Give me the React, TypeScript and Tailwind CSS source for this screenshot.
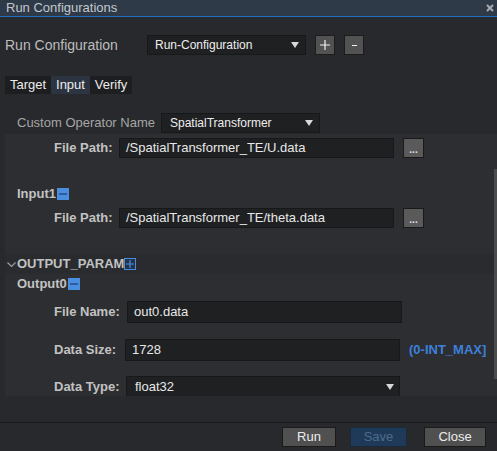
import React from "react";

const Tri = () => (
  <svg width="8" height="6" viewBox="0 0 8 6" className="shrink-0">
    <polygon points="0,0 8,0 4,6" fill="#d8d8d8" />
  </svg>
);

const MinusBox = () => (
  <span className="inline-flex w-[12px] h-[12px] bg-[#4a8ee0] items-center justify-center shrink-0">
    <span className="block w-[8px] h-[2px] bg-[#2b5d9e]" />
  </span>
);

const PlusBox = () => (
  <span className="inline-flex w-[12px] h-[12px] border border-[#4a8ee0] bg-[#25324a] items-center justify-center shrink-0">
    <svg width="8" height="8" viewBox="0 0 8 8">
      <path d="M4 0V8M0 4H8" stroke="#4a8ee0" strokeWidth="1.2" />
    </svg>
  </span>
);

const Field = ({ value, w = "w-[275px]", h = "h-[21px]" }: { value: string; w?: string; h?: string }) => (
  <div className={`${w} ${h} bg-[#1f2022] border border-[#17181a] flex items-center pl-[6px] text-[13px] text-[#e8e8e8] shrink-0`}>
    {value}
  </div>
);

const Dots = () => (
  <div className="w-[21px] h-[20px] bg-[#5a5a5b] border border-[#1a1a1a] flex items-end justify-center pb-[4px] shrink-0">
    <span className="text-[#e0e0e0] text-[10px] leading-[6px] font-bold tracking-[0px]">...</span>
  </div>
);

export default function App() {
  return (
    <div className="w-[497px] h-[451px] bg-[#27292c] flex flex-col overflow-hidden font-['Liberation_Sans',Arial,sans-serif] select-none">
      {/* title bar */}
      <div className="h-[16px] bg-[#2e3a48] flex items-center justify-between pl-[6px] pr-[3px] overflow-hidden shrink-0">
        <span className="text-[13px] leading-[13px] text-[#c4c8cc] -mt-[2px]">Run Configurations</span>
        <svg width="8" height="8" viewBox="0 0 8 8" className="-mt-[1px]">
          <path d="M1 1L7 7M7 1L1 7" stroke="#a8acb0" strokeWidth="2" />
        </svg>
      </div>
      <div className="h-[1px] bg-[#1f6fc4] shrink-0" />

      {/* run configuration row */}
      <div className="flex items-center mt-[18px] pl-[5px] h-[20px] shrink-0">
        <span className="text-[14px] text-[#bdbdbd] w-[142px]">Run Configuration</span>
        <div className="w-[159px] h-[20px] bg-[#1f2022] border border-[#17181a] flex items-center justify-between pl-[7px] pr-[6px] text-[12px] text-[#eeeeee]">
          <span>Run-Configuration</span>
          <Tri />
        </div>
        <div className="ml-[9px] w-[20px] h-[20px] bg-[#525253] border border-[#1c1c1c] flex items-center justify-center">
          <svg width="10" height="10" viewBox="0 0 10 10">
            <path d="M5 0V10M0 5H10" stroke="#f0f0f0" strokeWidth="1.2" />
          </svg>
        </div>
        <div className="ml-[9px] w-[20px] h-[20px] bg-[#525253] border border-[#1c1c1c] flex items-center justify-center">
          <span className="block w-[5px] h-[1px] bg-[#f0f0f0]" />
        </div>
      </div>

      {/* tabs */}
      <div className="flex mt-[21px] pl-[5px] h-[18px] shrink-0 text-[13px] text-[#ececec]">
        <div className="w-[46px] bg-[#1d1e20] flex items-center justify-center">Target</div>
        <div className="w-[39px] bg-[#2c3441] flex items-center justify-center">Input</div>
        <div className="w-[42px] bg-[#1d1e20] flex items-center justify-center">Verify</div>
      </div>

      {/* custom operator */}
      <div className="flex items-center mt-[19px] pl-[17px] h-[19px] shrink-0">
        <span className="text-[13px] text-[#a6a6a6] w-[144px]">Custom Operator Name</span>
        <div className="w-[159px] h-[20px] bg-[#1f2022] border border-[#17181a] flex items-center justify-between pl-[8px] pr-[6px] text-[12px] text-[#eeeeee]">
          <span>SpatialTransformer</span>
          <Tri />
        </div>
      </div>

      {/* scroll area */}
      <div className="mt-[2px] ml-[5px] h-[262px] relative overflow-hidden shrink-0">
        <div className="flex flex-col">
          <div className="bg-[#2d2e31] h-[120px] pt-[4px] flex flex-col">
            <div className="flex items-center pl-[49px] h-[20px]">
              <span className="text-[13px] font-bold text-[#c2c2c2] w-[65px]">File Path:</span>
              <Field value="/SpatialTransformer_TE/U.data" h="h-[20px]" />
              <div className="ml-[9px]"><Dots /></div>
            </div>
            <div className="flex items-center pl-[12px] h-[20px] mt-[26px] gap-[1px]">
              <span className="text-[13px] font-bold text-[#c2c2c2]">Input1</span>
              <MinusBox />
            </div>
            <div className="flex items-center pl-[49px] h-[20px] mt-[4px]">
              <span className="text-[13px] font-bold text-[#c2c2c2] w-[65px]">File Path:</span>
              <Field value="/SpatialTransformer_TE/theta.data" h="h-[20px]" />
              <div className="ml-[9px]"><Dots /></div>
            </div>
          </div>
          <div className="bg-[#292b2e] h-[20px] flex items-center">
            <svg width="9" height="6" viewBox="0 0 9 6" className="ml-[2px] mt-[1px]">
              <path d="M0.5 0.5L4.5 4.5L8.5 0.5" stroke="#9a9ea2" strokeWidth="1.2" fill="none" />
            </svg>
            <span className="ml-[1px] text-[13px] font-bold text-[#c2c2c2]">OUTPUT_PARAM</span>
            <PlusBox />
          </div>
          <div className="bg-[#2d2e31] h-[140px] flex flex-col">
            <div className="flex items-center pl-[12px] h-[20px] gap-[1px]">
              <span className="text-[13px] font-bold text-[#c2c2c2]">Output0</span>
              <MinusBox />
            </div>
            <div className="flex items-center pl-[49px] h-[22px] mt-[7px]">
              <span className="text-[13px] font-bold text-[#c2c2c2] w-[73px]">File Name:</span>
              <Field value="out0.data" h="h-[22px]" />
            </div>
            <div className="flex items-center pl-[49px] h-[22px] mt-[16px]">
              <span className="text-[13px] font-bold text-[#c2c2c2] w-[71px]">Data Size:</span>
              <Field value="1728" h="h-[22px]" />
              <span className="ml-[9px] text-[13px] font-bold text-[#3d80db]">(0-INT_MAX]</span>
            </div>
            <div className="flex items-center pl-[49px] h-[22px] mt-[15px]">
              <span className="text-[13px] font-bold text-[#c2c2c2] w-[72px]">Data Type:</span>
              <div className="w-[274px] h-[22px] bg-[#1f2022] border border-[#17181a] flex items-center justify-between pl-[8px] pr-[5px] text-[13px] text-[#e8e8e8]">
                <span>float32</span>
                <Tri />
              </div>
            </div>
          </div>
        </div>
        {/* scrollbar */}
        <div className="absolute right-0 top-[35px] w-[3px] h-[210px] bg-[#4b4c4e]" />
      </div>

      <div className="flex-1" />
      <div className="h-[1px] bg-[#18191a] shrink-0" />
      <div className="h-[28px] flex items-center justify-end pr-[11px] shrink-0 text-[13px]">
        <div className="w-[54px] h-[20px] bg-[#505051] border border-[#1a1a1a] flex items-center justify-center text-[#ececec]">Run</div>
        <div className="ml-[14px] w-[57px] h-[20px] bg-[#1e3a58] border border-[#1a2a3a] flex items-center justify-center text-[#4c6c8c]">Save</div>
        <div className="ml-[17px] w-[62px] h-[20px] bg-[#505051] border border-[#1a1a1a] flex items-center justify-center text-[#ececec]">Close</div>
      </div>
    </div>
  );
}
